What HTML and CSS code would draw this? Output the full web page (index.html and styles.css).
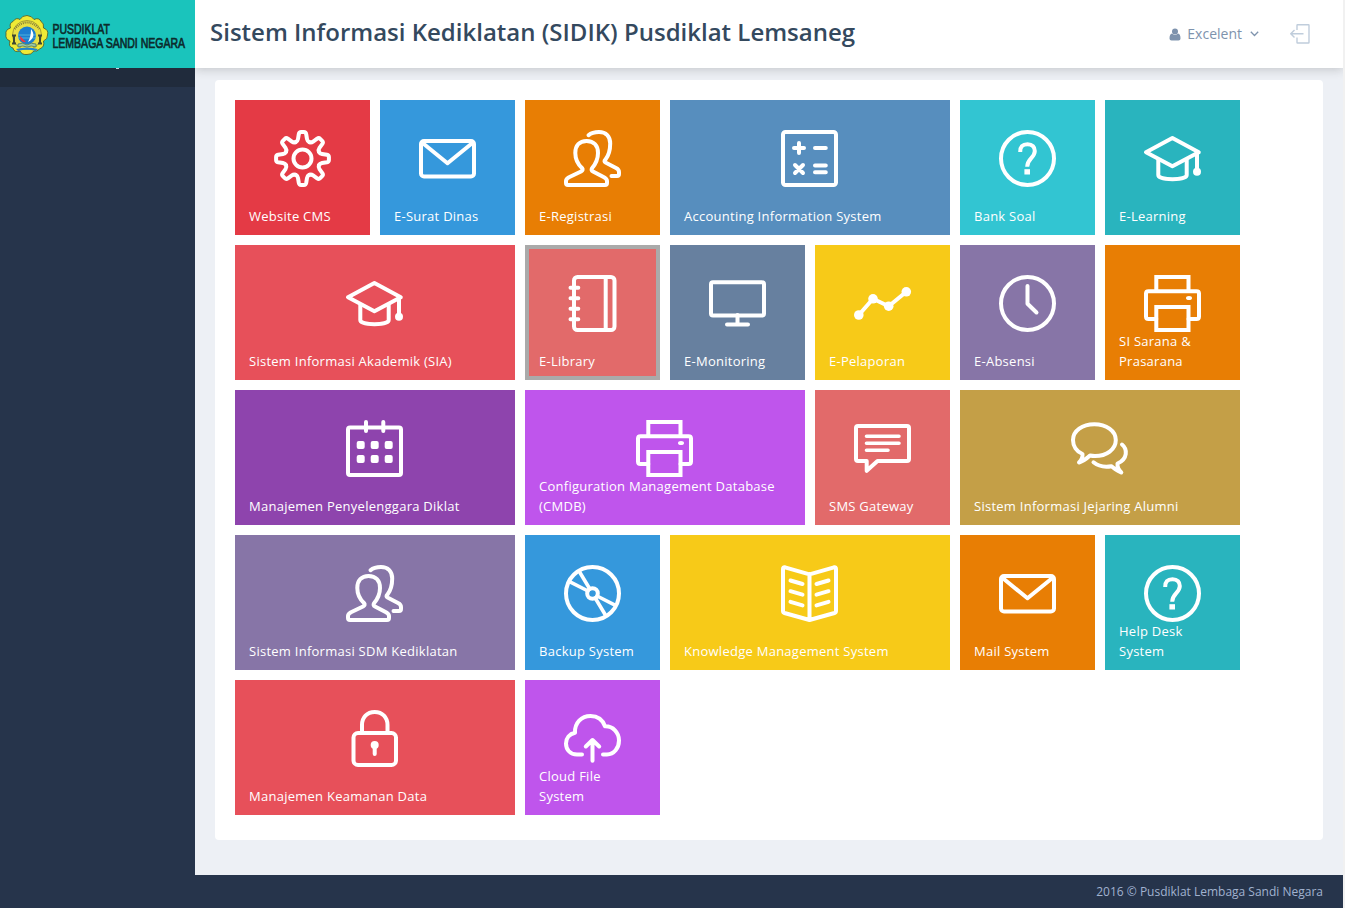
FILE: index.html
```html
<!DOCTYPE html>
<html lang="id">
<head>
<meta charset="utf-8">
<title>Sistem Informasi Kediklatan (SIDIK)</title>
<link rel="stylesheet" href="styles.css">
</head>
<body>
<svg class="defs" aria-hidden="true">
  <g id="cog-tooth"><path d="M-6.8-16.4Q-4.9-17.2-4.5-19.5L-3.7-24.4Q-3.3-26.4-1.4-26.4H1.4Q3.3-26.4 3.7-24.4L4.5-19.5Q4.9-17.2 6.8-16.4"/></g>
  <g id="mail"><rect x="2" y="11" width="53" height="35.5" rx="3"/><path d="M3 12.5L28.5 33.3L54 12.5"/></g>
  <g id="users"><path d="M18.2 38.3C13 33.5 11.3 29 11.3 23C11.3 15.5 15.5 11 22.6 11S34 15.5 34 23C34 29 32 33.5 28 38.3Q26.800 40.300 29 41.500L40 47.300Q43 49 43 51V53Q43 55 41 55H4Q2 55 2 53V51Q2 49 5 47.300L17 41.500Q19.500 40 18.200 38.300Z"/><path d="M24.500 5.200C27 3 31 2 35 2C42 2 46.200 6.500 46.200 13.500C46.200 20 45 25 41.500 29.500Q39.500 31.500 41.500 32.500L52 38Q55 39.500 55 42V44Q55 46 53 46H47.500"/></g>
  <g id="help"><circle cx="28.500" cy="28.500" r="26.500"/><path d="M21.200 22C21 16.800 23.500 14.300 28.500 14.300C33.500 14.300 35.800 17.200 35.800 21C35.800 28 28.200 28.500 28.200 36.800" stroke-linecap="butt"/><rect class="solid" x="25.400" y="39.200" width="5.600" height="5.300"/></g>
  <g id="cap"><path d="M2 22.300L28.400 8L54.800 22.300L28.400 36.300Z"/><path d="M14.300 30V45C14.300 50.500 42.700 50.500 42.700 45V30M53 24V39"/><circle class="solid" cx="53" cy="41.700" r="4"/></g>
  <g id="printer"><path d="M12.300 44H4.500Q2 44 2 41.500V18.500Q2 16.200 4.500 16.200H52.500Q55 16.200 55 18.500V41.500Q55 44 52.500 44H44.500"/><path d="M12.300 16V2H44.500V16M12.300 32H44.500V55H12.300Z" stroke-linejoin="miter"/><ellipse class="solid" cx="45" cy="23" rx="3" ry="2"/></g>
</svg>

<div class="page">
  <aside class="sidebar">
    <a class="brand" href="#">
      <svg width="195" height="68" viewBox="0 0 195 68">
        <g class="emblem" stroke="#4b562b" stroke-width=".8">
          <path fill="#efea35" d="M27 15.500Q32 16 34 19.500Q39 17 41.500 22Q44 23 43.500 28Q49 30 47.500 35Q48 39 43.500 41Q45 47 39.500 49Q37 52 34 51Q31 55 27 54.500Q22 55 20 51Q14 53 13 48Q8 47 10 41Q5 39 6 34Q5 30 10.500 28Q9 23 13 21.500Q16 17 20 19.500Q22 15.500 27 15.500Z"/>
          <circle cx="27" cy="35" r="14.500" fill="#e8df43" stroke="#948d30"/>
          <circle cx="27" cy="35.500" r="9" fill="#1c7ed0" stroke="none"/>
          <path d="M14.500 29Q27 16 39.500 29" fill="none" stroke="#817b36" stroke-width="2" stroke-dasharray="1 1"/>
          <path d="M18 35H36M18 38H36" stroke="#67c7df" stroke-width=".7"/>
          <path d="M20 36L26 42Q20 43 20 36Z" fill="#ef3440" stroke="none"/>
          <path d="M31 29Q37 37 28 42Q31 37 31 29Z" fill="#fff" stroke="none"/>
          <path d="M12 35.500H16M12 43.500H16M38 35.500H42M38 43.500H42M14 35V44M40 35V44" stroke="#3f4932" stroke-width="2"/>
          <path d="M18 44Q23 42 27 45Q31 42 36 44V47Q31 45 27 47Q23 45 18 47Z" fill="#9bc7a5" stroke="#4b7960"/>
          <path d="M16 49Q27 46 38 49L36 51Q27 48.500 18 51Z" fill="#2384cc" stroke="none"/>
        </g>
        <text class="brand-text" transform="translate(52.500 33.500) scale(.78 1.150)" textLength="73.500" lengthAdjust="spacingAndGlyphs">PUSDIKLAT</text>
        <text class="brand-text" transform="translate(52.500 47.500) scale(.78 1.150)" textLength="170" lengthAdjust="spacingAndGlyphs">LEMBAGA SANDI NEGARA</text>
      </svg>
    </a>
    <div class="side-strip"><span class="side-mark"></span></div>
  </aside>

  <div class="main">
    <header class="topbar">
      <h1>Sistem Informasi Kediklatan (SIDIK) Pusdiklat Lemsaneg</h1>
      <a class="user" href="#">
        <svg class="person" width="12" height="13" viewBox="0 0 12 13"><circle cx="6" cy="3.400" r="3"/><path d="M3 5.600Q.5 6 .5 10.500Q.5 12.500 2.500 12.500H9.500Q11.500 12.500 11.500 10.500Q11.500 6 9 5.600Q6 8.300 3 5.600Z"/></svg>
        <span>Excelent</span>
        <svg class="chevron" width="9" height="6" viewBox="0 0 9 6"><path d="M.8 .8L4.500 4.500L8.200 .8"/></svg>
      </a>
      <a class="logout" href="#"><svg width="20" height="20" viewBox="0 0 20 20"><path d="M7 6V1.200Q7 .7 7.500 .7H18.500Q19 .7 19 1.200V18.500Q19 19 18.500 19H7.500Q7 19 7 18.500V13.500M13.500 9.700H.8M4.500 6L.8 9.700L4.500 13.400"/></svg></a>
    </header>

    <main class="content">
      <section class="tiles">
        <a class="tile red-intense"><svg viewBox="0 0 57 57"><g transform="translate(28.500 28.500)"><use href="#cog-tooth"/><use href="#cog-tooth" transform="rotate(45)"/><use href="#cog-tooth" transform="rotate(90)"/><use href="#cog-tooth" transform="rotate(135)"/><use href="#cog-tooth" transform="rotate(180)"/><use href="#cog-tooth" transform="rotate(225)"/><use href="#cog-tooth" transform="rotate(270)"/><use href="#cog-tooth" transform="rotate(315)"/><circle r="9"/></g></svg><span>Website CMS</span></a>
        <a class="tile blue"><svg viewBox="0 0 57 57"><use href="#mail"/></svg><span>E-Surat Dinas</span></a>
        <a class="tile orange"><svg viewBox="0 0 57 57"><use href="#users"/></svg><span>E-Registrasi</span></a>
        <a class="tile wide steel"><svg viewBox="0 0 57 57"><rect x="2" y="2" width="53" height="53" rx="2.500"/><path d="M13 18H23M18 13V23M34 18H44.800M14 35L22 43M22 35L14 43M34 35.500H44.800M34 42.300H44.800"/></svg><span>Accounting Information System</span></a>
        <a class="tile turquoise"><svg viewBox="0 0 57 57"><use href="#help"/></svg><span>Bank Soal</span></a>
        <a class="tile teal"><svg viewBox="0 0 57 57"><use href="#cap"/></svg><span>E-Learning</span></a>

        <a class="tile wide red"><svg viewBox="0 0 57 57"><use href="#cap"/></svg><span>Sistem Informasi Akademik (SIA)</span></a>
        <a class="tile pink hovered"><svg viewBox="0 0 57 57"><rect x="10" y="2" width="40.500" height="53" rx="3.500"/><path d="M41.700 2V55M6.500 12.700H14.300M6.500 23.200H14.300M6.500 33.700H14.300M6.500 44.200H14.300"/></svg><span>E-Library</span></a>
        <a class="tile slate"><svg viewBox="0 0 57 57"><rect x="2" y="7.300" width="53" height="33.200" rx="2"/><path d="M28.500 40V49M18 49.500H39"/></svg><span>E-Monitoring</span></a>
        <a class="tile yellow"><svg viewBox="0 0 57 57"><path d="M4.800 40L19 23.800L34.700 31.200L52.300 16.800"/><g class="solid"><circle cx="4.800" cy="40" r="4.800"/><circle cx="19" cy="23.800" r="4.800"/><circle cx="34.700" cy="31.200" r="4.800"/><circle cx="52.300" cy="16.800" r="4.800"/></g></svg><span>E-Pelaporan</span></a>
        <a class="tile purple"><svg viewBox="0 0 57 57"><circle cx="28.500" cy="28.500" r="26.500"/><path d="M28.500 11V28.800L37.500 37.500"/></svg><span>E-Absensi</span></a>
        <a class="tile orange"><svg viewBox="0 0 57 57"><use href="#printer"/></svg><span>SI Sarana &amp; Prasarana</span></a>

        <a class="tile wide plum"><svg viewBox="0 0 57 57"><rect x="2" y="7.500" width="53" height="47.500" rx="2"/><path d="M20 2V11M37.300 2V11"/><g class="solid"><rect x="10.700" y="21" width="8" height="8" rx="2"/><rect x="24.700" y="21" width="8" height="8" rx="2"/><rect x="38.700" y="21" width="8" height="8" rx="2"/><rect x="10.700" y="35" width="8" height="8" rx="2"/><rect x="24.700" y="35" width="8" height="8" rx="2"/><rect x="38.700" y="35" width="8" height="8" rx="2"/></g></svg><span>Manajemen Penyelenggara Diklat</span></a>
        <a class="tile wide violet"><svg viewBox="0 0 57 57"><use href="#printer"/></svg><span>Configuration Management Database (CMDB)</span></a>
        <a class="tile pink"><svg viewBox="0 0 57 57"><path d="M4 6H53Q55 6 55 8V39Q55 41 53 41H23.500L12.700 50.800V41H4Q2 41 2 39V8Q2 6 4 6Z"/><path stroke-width="3.600" d="M12.500 16.300H45M12.500 23.300H45M12.500 30.300H34"/></svg><span>SMS Gateway</span></a>
        <a class="tile wide gold"><svg viewBox="0 0 57 57"><path d="M11.500 34C5.500 31.500 2 26 2 20C2 10.500 11.500 4.200 23.300 4.200S44.800 10.500 44.800 20S35.500 36 24 36Q21.500 36 19 35.500Q13 41 8 42.500Q12 38.500 11.500 34Z"/><path d="M51 24.500C56.500 29 57 39 46.500 43.500Q46 48 50.300 52.500Q43 48.500 40.500 46.200C33 47.500 27 46 22.500 42.300"/></svg><span>Sistem Informasi Jejaring Alumni</span></a>

        <a class="tile wide purple"><svg viewBox="0 0 57 57"><use href="#users"/></svg><span>Sistem Informasi SDM Kediklatan</span></a>
        <a class="tile blue"><svg viewBox="0 0 57 57"><circle cx="28.500" cy="28.500" r="26.500"/><circle cx="28.500" cy="28.500" r="5.300"/><path stroke-width="3.600" d="M15.300 6.500L25.800 24M6 16.800L24 26M41.700 50.500L31.200 33M51 40.200L33 31"/></svg><span>Backup System</span></a>
        <a class="tile wide yellow"><svg viewBox="0 0 57 57"><path d="M2 4Q2 1.800 4 2.300L28.500 9.300L53 2.300Q55 1.800 55 4V46Q55 47.500 53.500 48L28.500 55L3.500 48Q2 47.500 2 46ZM28.500 9.300V55"/><path d="M9.500 15.500L21.500 19M9.500 26.200L21.500 29.700M9.500 36.900L21.500 40.400M47.500 15.500L35.500 19M47.500 26.200L35.500 29.700M47.500 36.900L35.500 40.400"/></svg><span>Knowledge Management System</span></a>
        <a class="tile orange"><svg viewBox="0 0 57 57"><use href="#mail"/></svg><span>Mail System</span></a>
        <a class="tile teal"><svg viewBox="0 0 57 57"><use href="#help"/></svg><span>Help Desk System</span></a>

        <a class="tile wide red"><svg viewBox="0 0 57 57"><rect x="7.500" y="23" width="42.500" height="32" rx="4.500"/><path d="M16 23V15C16 7.500 21 2 28.700 2S41.500 7.500 41.500 15V23M28.700 35V44"/><circle class="solid" cx="28.700" cy="35" r="4"/></svg><span>Manajemen Keamanan Data</span></a>
        <a class="tile violet"><svg viewBox="0 0 57 57"><path d="M18 44.500H13C6 44.500 2 39.500 2 33.500C2 28 5.500 24 11 22.800C10.500 13 17.500 6 26.500 6C33 6 38.500 9.500 41 16.300C49 16 55 22.500 55 30.500C55 38 50 44.500 43 44.500H39"/><path d="M28.500 50.700V30M21.800 36.500L28.500 30L35.200 36.500"/></svg><span>Cloud File System</span></a>
      </section>
    </main>
    <footer class="footer">2016 © Pusdiklat Lembaga Sandi Negara</footer>
  </div>
</div>
</body>
</html>
```

FILE: styles.css
```css
* { box-sizing: border-box; }
body { margin: 0; background: #f1f1f1; font-family: "Open Sans", sans-serif; font-size: 13px; }
a { text-decoration: none; color: inherit; }
.defs { display: none; }
.page { display: flex; width: 1343px; height: 908px; background: #edf0f5; }

.sidebar { width: 195px; flex: none; background: #26344b; }
.brand { display: block; height: 68px; background: #1ac4bc; }
.brand svg { display: block; }
.brand-text { font: 12.5px "Liberation Sans", Arial, sans-serif; fill: #0c2b2c; stroke: #0c2b2c; stroke-width: .6; }
.side-strip { height: 19px; padding-left: 116px; background: #202b3c; }
.side-mark { display: block; width: 3px; height: 1px; background: #c9d3dd; }

.main { flex: 1; display: flex; flex-direction: column; min-width: 0; }
.topbar { display: flex; align-items: center; height: 68px; flex: none; padding: 0 33px 0 15px; background: #fff; box-shadow: 0 1px 10px rgba(50, 50, 50, .25); clip-path: inset(0 0 -12px 0); }
.topbar h1 { flex: 1; margin: 0 0 4px; font-size: 24px; line-height: 32px; font-weight: 600; color: #34495e; white-space: nowrap; }
.user { display: flex; align-items: center; color: #7e93ad; font-size: 14px; line-height: 20px; }
.person { margin-right: 6px; fill: #7e93ad; }
.chevron { margin-left: 8px; fill: none; stroke: #7e93ad; stroke-width: 1.3; }
.logout { margin-left: 31px; height: 20px; }
.logout svg { display: block; fill: none; stroke: #c0cddc; stroke-width: 1.4; }

.content { flex: 1; padding: 12px 20px 35px; }
.tiles { display: grid; grid-template-columns: repeat(7, 135px); grid-auto-rows: 135px; gap: 10px; height: 760px; padding: 20px; background: #fff; border-radius: 4px; }
.tile { display: flex; flex-direction: column; justify-content: space-between; padding: 30px 0 9px; color: #fff; }
.wide { grid-column: span 2; }
.tile svg { align-self: center; width: 57px; height: 57px; margin-bottom: -1px; overflow: visible; fill: none; stroke: #fff; stroke-width: 4; stroke-linecap: round; stroke-linejoin: round; flex: none; }
.wide svg { margin-right: 1px; }
.tile .solid, .defs .solid { fill: #fff; stroke: none; }
.tile span { padding: 0 14px; line-height: 20px; letter-spacing: .26px; font-weight: 500; }
.hovered { box-shadow: inset 0 0 0 4px #aaa; }

.red-intense { background: #e43a45; }
.blue { background: #3598dc; }
.orange { background: #e87e04; }
.steel { background: #578ebe; }
.turquoise { background: #32c5d2; }
.teal { background: #29b4be; }
.red { background: #e7505a; }
.pink { background: #e26a6a; }
.slate { background: #67809f; }
.yellow { background: #f7ca18; }
.purple { background: #8775a7; }
.plum { background: #8e44ad; }
.violet { background: #bf55ec; }
.gold { background: #c49f47; }

.footer { height: 33px; flex: none; padding-right: 20px; background: #26344b; color: #a1b2cf; font-size: 12px; line-height: 33px; text-align: right; }
```
